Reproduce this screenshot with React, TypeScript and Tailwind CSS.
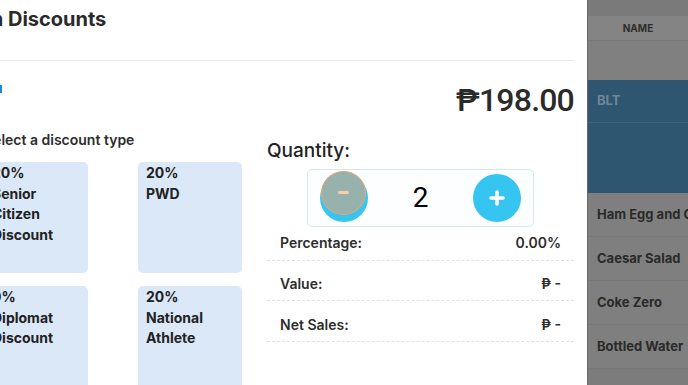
import React from 'react';

interface Discount {
  rate: string;
  name: string[];
}

const discounts: Discount[] = [
  { rate: '20%', name: ['Senior', 'Citizen', 'Discount'] },
  { rate: '20%', name: ['PWD'] },
  { rate: '0%', name: ['Diplomat', 'Discount'] },
  { rate: '20%', name: ['National', 'Athlete'] },
];

const menuItems = ['Ham Egg and Cheese', 'Caesar Salad', 'Coke Zero', 'Bottled Water'];

const SummaryRow: React.FC<{ label: string; value: string; first?: boolean }> = ({ label, value, first }) => (
  <div
    className={
      first
        ? 'flex items-end justify-between h-[34px] pb-[7px] px-[13px] border-b border-dashed border-[#e2e2e2]'
        : 'flex items-end justify-between h-[40.5px] pb-[6px] px-[13px] border-b border-dashed border-[#e2e2e2]'
    }
  >
    <span className="text-[14px] leading-[20px] font-semibold text-[#2d2d2d]">{label}</span>
    <span className="text-[14px] leading-[20px] font-semibold text-[#2d2d2d]">{value}</span>
  </div>
);

const App: React.FC = () => {
  return (
    <div
      className="flex w-[688px] h-[385px] overflow-hidden bg-white"
      style={{ fontFamily: 'Inter, "Noto Sans", sans-serif' }}
    >
      {/* modal, left edge is off screen */}
      <div className="w-[587px] shrink-0 h-full bg-white flex flex-col">
        <div className="h-[61px] shrink-0 mr-[13px] border-b border-[#e8e8e8] flex items-start pt-[4px]">
          <h1 className="text-[20px] font-bold text-[#2a2a2a] -ml-[40px] whitespace-nowrap">Item Discounts</h1>
        </div>

        <div className="flex shrink-0 justify-between items-start mr-[13px] pt-[21px] h-[78px]">
          <div className="w-[2px] h-[8px] bg-[#1e88e5] mt-[3px]"></div>
          <div className="text-[32px] font-medium tracking-tight text-[#2b2b2b] leading-none mt-[2px]" style={{ fontFamily: 'Roboto, sans-serif' }}>
            ₱198.00
          </div>
        </div>

        <div className="flex shrink-0">
          <div className="-ml-[16px] w-[258px] shrink-0">
            <p className="text-[14px] font-semibold text-[#2d2d2d] -mt-[10px] mb-[12px] whitespace-nowrap">Select a discount type</p>
            <div className="grid grid-cols-2 gap-x-[50px] gap-y-[13px]">
              {discounts.map((d, i) => (
                <div key={i} className="bg-[#dbe8f8] rounded-[5px] h-[111px] px-[8px] pt-[1px]">
                  <div className="text-[14px] font-bold text-[#222] leading-[20.5px]">{d.rate}</div>
                  {d.name.map((n) => (
                    <div key={n} className="text-[14px] font-bold text-[#222] leading-[20.5px]">{n}</div>
                  ))}
                </div>
              ))}
            </div>
          </div>

          <div className="ml-[25px] w-[307px] shrink-0 -mt-[2px]">
            <p className="text-[19px] font-medium text-[#222]">Quantity:</p>
            <div className="mx-[40px] mt-[3px] h-[58px] border border-[#d3e9f2] rounded-[5px] bg-[#fdfeff] flex items-center justify-between px-[12px]">
              <div className="relative w-[48px] h-[48px]">
                <div className="absolute inset-0 rounded-full bg-[#36c5f0]"></div>
                <div className="absolute left-[1px] top-[-3px] w-[45px] h-[44px] rounded-full bg-[#97b1ad] border-[1.5px] border-[#f2a56f] flex items-center justify-center">
                  <div className="w-[11px] h-[3px] rounded-sm bg-[#f7cfa8]"></div>
                </div>
              </div>
              <span className="text-[28px] text-black" style={{ fontFamily: 'Roboto, sans-serif' }}>2</span>
              <button className="w-[48px] h-[48px] rounded-full bg-[#36c5f0] flex items-center justify-center">
                <svg width="16" height="16" viewBox="0 0 16 16">
                  <path d="M8 2v12M2 8h12" stroke="#fff" strokeWidth="3.5" strokeLinecap="round" />
                </svg>
              </button>
            </div>
            <div>
              <SummaryRow label="Percentage:" value="0.00%" first />
              <SummaryRow label="Value:" value="₱ -" />
              <SummaryRow label="Net Sales:" value="₱ -" />
            </div>
          </div>
        </div>
      </div>

      {/* background table under the dim overlay */}
      <div className="flex-1 h-full bg-[#7c7c7c] border-l border-[#6a6a6a] flex flex-col overflow-hidden">
        <div className="h-[15px] shrink-0 bg-[#7a7a7a]"></div>
        <div className="h-[26px] shrink-0 bg-[#848484] border-y border-[#7a7a7a] flex items-center justify-center">
          <span className="text-[10px] font-bold text-[#2e2e2e]">NAME</span>
        </div>
        <div className="h-[39px] shrink-0 bg-[#808080]"></div>
        <div className="h-[113px] shrink-0 bg-[#2e5670] flex flex-col">
          <div className="h-[43px] border-b border-[#3c6580] flex items-center px-[9px]">
            <span className="text-[13px] font-bold text-[#6e8797]">BLT</span>
          </div>
        </div>
        {menuItems.map((m) => (
          <div key={m} className="h-[44px] shrink-0 bg-[#7f7f7f] border-b border-[#777] flex items-center px-[9px]">
            <span className="text-[13px] font-bold text-[#2a2a2a] whitespace-nowrap">{m}</span>
          </div>
        ))}
      </div>
    </div>
  );
};

export default App;
